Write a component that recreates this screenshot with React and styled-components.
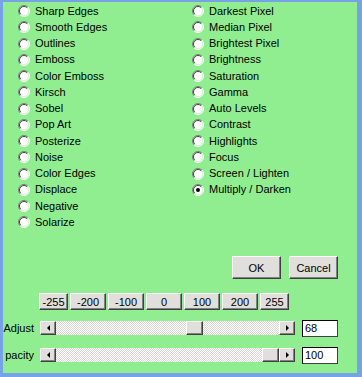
import React from "react";
import styled, { createGlobalStyle } from "styled-components";

const Global = createGlobalStyle`
  html, body { margin: 0; padding: 0; background: #90ee90; }
  body { font-family: "Liberation Sans", Arial, sans-serif; font-size: 11px; color: #000; }
`;

const Window = styled.div`
  box-sizing: border-box;
  width: 362px;
  height: 377px;
  background: #90ee90;
  border-style: solid;
  border-color: #77a2e6;
  border-width: 2px 5px 4px 3px;
  display: flex;
  flex-direction: column;
  overflow: hidden;
`;

const Options = styled.div`
  display: grid;
  grid-auto-flow: column;
  grid-template-rows: repeat(14, 16.25px);
  grid-template-columns: 174px 1fr;
  padding: 1px 0 0 15px;
  height: 228px;
`;

const Option = styled.label`
  display: flex;
  align-items: center;
  gap: 5px;
  white-space: nowrap;
  line-height: 13px;
`;

const RadioIcon = ({ checked }) => (
  <svg width="12" height="12" viewBox="0 0 12 12">
    <circle cx="6" cy="6" r="5" fill="#fff" />
    <path d="M2.1 9.9 A5.5 5.5 0 0 1 9.9 2.1" fill="none" stroke="#808080" strokeWidth="1" />
    <path d="M9.9 2.1 A5.5 5.5 0 0 1 2.1 9.9" fill="none" stroke="#ffffff" strokeWidth="1" />
    <path d="M2.8 9.2 A4.5 4.5 0 0 1 9.2 2.8" fill="none" stroke="#404040" strokeWidth="1" />
    <path d="M9.2 2.8 A4.5 4.5 0 0 1 2.8 9.2" fill="none" stroke="#e8e6e0" strokeWidth="1" />
    {checked && <circle cx="6" cy="6" r="2" fill="#000" />}
  </svg>
);

const Actions = styled.div`
  display: flex;
  justify-content: flex-end;
  gap: 8px;
  padding-right: 19px;
  margin-top: 25px;
`;

const Button = styled.button`
  box-sizing: border-box;
  width: ${(p) => p.$w || 49}px;
  height: ${(p) => p.$h || 23}px;
  padding: 0;
  margin: 0;
  font-family: "Liberation Sans", Arial, sans-serif;
  font-size: 11px;
  color: #000;
  background: #e0dfdc;
  border: 1px solid;
  border-color: #ffffff #404040 #404040 #ffffff;
  box-shadow: inset -1px -1px #808080;
  display: flex;
  align-items: center;
  justify-content: center;
`;

const Presets = styled.div`
  display: flex;
  gap: 2px;
  margin-top: 14px;
  padding-left: 36px;
`;

const SliderRow = styled.div`
  display: flex;
  align-items: center;
  height: 18px;
  margin-top: ${(p) => p.$mt}px;
`;

const Label = styled.div`
  box-sizing: border-box;
  width: 31px;
  text-align: right;
  white-space: nowrap;
  margin-right: 6px;
`;

const ScrollBar = styled.div`
  display: flex;
  width: 255px;
  height: 14px;
  margin-right: 7px;
`;

const Track = styled.div`
  flex: 1;
  display: flex;
  background-color: #ffffff;
  background-image: repeating-conic-gradient(#d8d6d0 0 25%, #ffffff 0 50%);
  background-size: 2px 2px;
`;

const ArrowButton = styled.div`
  box-sizing: border-box;
  width: 16px;
  height: 14px;
  background: #e0dfdc;
  border: 1px solid;
  border-color: #ffffff #404040 #404040 #ffffff;
  box-shadow: inset -1px -1px #808080;
  display: flex;
  align-items: center;
  justify-content: center;
`;

const Thumb = styled(ArrowButton)`
  width: 17px;
`;

const Arrow = styled.div`
  width: 0;
  height: 0;
  border-top: 3px solid transparent;
  border-bottom: 3px solid transparent;
  ${(p) => (p.$dir === "left" ? "border-right: 3px solid #000;" : "border-left: 3px solid #000;")}
`;

const ValueBox = styled.div`
  box-sizing: border-box;
  width: 36px;
  height: 17px;
  background: #fff;
  border: 1px solid;
  border-color: #000 #404040 #404040 #000;
  padding: 1px 0 0 2px;
  line-height: 13px;
`;

const left = [
  "Sharp Edges", "Smooth Edges", "Outlines", "Emboss", "Color Emboss", "Kirsch", "Sobel",
  "Pop Art", "Posterize", "Noise", "Color Edges", "Displace", "Negative", "Solarize",
];
const right = [
  "Darkest Pixel", "Median Pixel", "Brightest Pixel", "Brightness", "Saturation", "Gamma",
  "Auto Levels", "Contrast", "Highlights", "Focus", "Screen / Lighten", "Multiply / Darken",
];

const presets = [
  ["-255", 29], ["-200", 36], ["-100", 36], ["0", 36], ["100", 36], ["200", 36], ["255", 29],
];

function Slider({ label, value, min, max, mt }) {
  const travel = 255 - 32 - 17;
  const pos = Math.round(((value - min) / (max - min)) * travel);
  return (
    <SliderRow $mt={mt}>
      <Label>{label}</Label>
      <ScrollBar>
        <ArrowButton><Arrow $dir="left" /></ArrowButton>
        <Track>
          <div style={{ width: pos }} />
          <Thumb />
        </Track>
        <ArrowButton><Arrow $dir="right" /></ArrowButton>
      </ScrollBar>
      <ValueBox>{value}</ValueBox>
    </SliderRow>
  );
}

export default function App() {
  const all = [...left, ...right];
  return (
    <>
      <Global />
      <Window>
        <Options>
          {all.map((name) => (
            <Option key={name}>
              <RadioIcon checked={name === "Multiply / Darken"} />
              <span>{name}</span>
            </Option>
          ))}
        </Options>
        <Actions>
          <Button>OK</Button>
          <Button>Cancel</Button>
        </Actions>
        <Presets>
          {presets.map(([t, w]) => (
            <Button key={t} $w={w} $h={17}>{t}</Button>
          ))}
        </Presets>
        <Slider label="Adjust" value={68} min={-255} max={255} mt={9} />
        <Slider label="pacity" value={100} min={0} max={100} mt={9} />
      </Window>
    </>
  );
}
